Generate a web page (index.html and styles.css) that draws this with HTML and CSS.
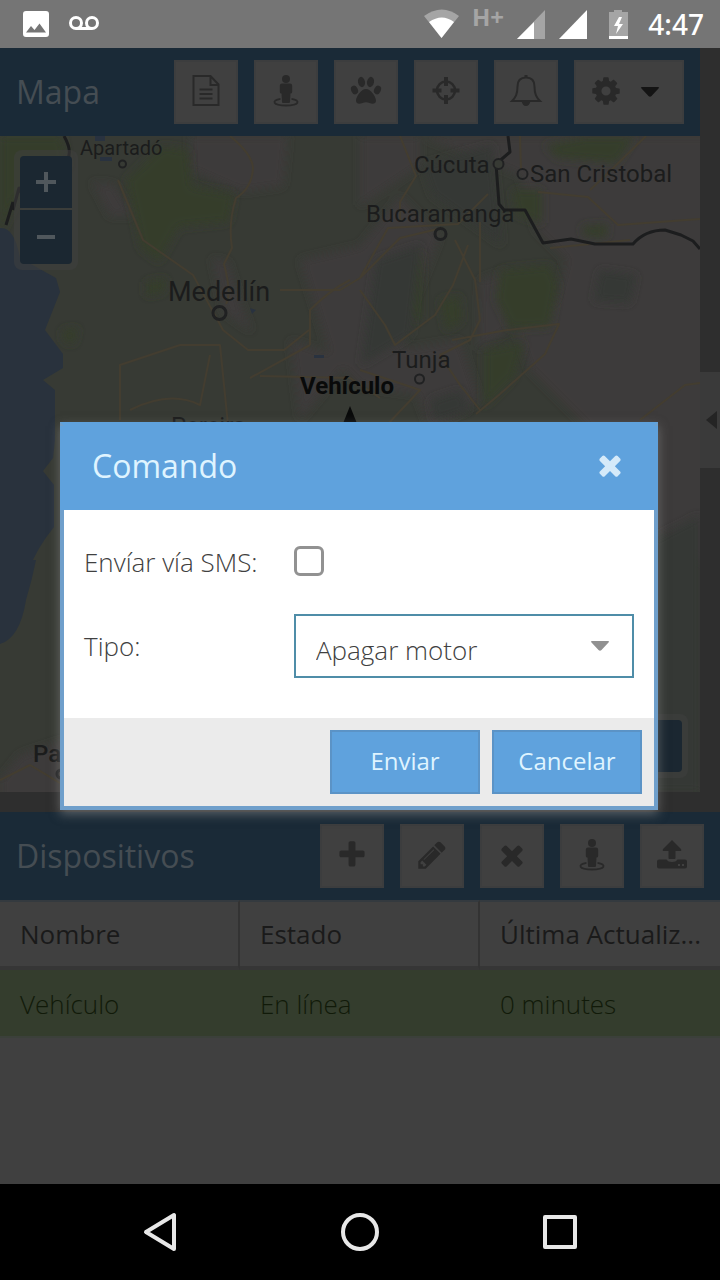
FILE: index.html
```html
<!DOCTYPE html>
<html lang="es">
<head>
<meta charset="utf-8">
<meta name="viewport" content="width=device-width, initial-scale=1">
<title>Mapa</title>
<link rel="stylesheet" href="styles.css">
</head>
<body>
<svg class="defs" aria-hidden="true">
  <symbol id="times" viewBox="-224 -168 2240 2240"><path d="M1490 1322q0 40-28 68l-136 136q-28 28-68 28t-68-28l-294-294-294 294q-28 28-68 28t-68-28l-136-136q-28-28-28-68t28-68l294-294-294-294q-28-28-28-68t28-68l136-136q28-28 68-28t68 28l294 294 294-294q28-28 68-28t68 28l136 136q28 28 28 68t-28 68l-294 294 294 294q28 28 28 68z"/></symbol>
  <symbol id="person" viewBox="0 0 40 40">
    <circle cx="20" cy="7" r="4"/>
    <path d="M16 11.500h8q2.200 0 2.200 2.200v6.300q0 1.500-1.700 1.500l-.5 8.500q0 1-1 1h-6q-1 0-1-1l-.5-8.500q-1.700 0-1.700-1.500v-6.300q0-2.200 2.200-2.200z"/>
    <path d="M14.500 26.800C5 28.500 6.500 33.500 20 33.500s15-5 5.500-6.700" fill="none" stroke="currentColor" stroke-width="1.800"/>
  </symbol>
</svg>
<header class="status">
  <svg class="notice" viewBox="0 0 90 48" role="img" aria-label="Notificaciones">
    <path fill="#fff" fill-rule="evenodd" d="M14 11h20q3 0 3 3v20q0 3-3 3H14q-3 0-3-3V14q0-3 3-3zM14 32.500h20l-6.500-9-5 6.500-3.500-4z" transform="translate(-4)"/>
    <g fill="none" stroke="#fff" stroke-width="3"><circle cx="60" cy="23" r="5.500"/><circle cx="76" cy="23" r="5.500"/><path d="M60 28.500h16"/></g>
  </svg>
  <svg class="signal" viewBox="0 0 48 48" role="img" aria-label="Wi-Fi"><path d="M8 16q18-13 35 0L25.500 38z" fill="#a5a5a5"/><path d="M13 22q13-9 25 0L25.500 38z" fill="#fff"/></svg>
  <span class="network">H+</span>
  <svg class="bars" viewBox="0 0 120 48" role="img" aria-label="Señal y batería">
    <path d="M39 10v29H11z" fill="#a5a5a5"/><path d="M28 22v17H11z" fill="#fff"/><path d="M81 10v29H53z" fill="#fff"/>
    <path d="M108 10h8v2h6v24h-19V12h5z" fill="#a5a5a5"/><path d="M103 36h19v3h-19zM113 17l-5 9h4l-2 8 7-10h-4l3-7z" fill="#fff"/>
  </svg>
  <time>4:47</time>
</header>

<main class="app">
  <div class="upper">
    <section class="panel">
      <div class="bar">
        <h1>Mapa</h1>
        <div class="tools">
          <button type="button" aria-label="Informes"><svg viewBox="0 0 40 40"><path d="M7.500 4h17l8 8.500v20.500h-25z M24.500 4v9h8" fill="none" stroke="currentColor" stroke-width="2"/><path d="M13.500 17.500h13M13.500 22h13M13.500 26.500h13" stroke="currentColor" stroke-width="2"/></svg></button>
          <button type="button" aria-label="Seguir"><svg><use href="#person"/></svg></button>
          <button type="button" aria-label="Animal"><svg viewBox="0 0 40 40"><ellipse cx="15.500" cy="10" rx="3.500" ry="5.200" transform="rotate(-12 15.500 10)"/><ellipse cx="24.500" cy="10" rx="3.500" ry="5.200" transform="rotate(12 24.500 10)"/><ellipse cx="8.500" cy="18" rx="3.300" ry="4.500" transform="rotate(-25 8.500 18)"/><ellipse cx="31.500" cy="18" rx="3.300" ry="4.500" transform="rotate(25 31.500 18)"/><path d="M20 17c5 0 10 8 10 11.500 0 4-4 3.500-6.500 2.500q-3.500-1.500-7 0c-2.500 1-6.500 1.500-6.500-2.500C10 25 15 17 20 17z"/></svg></button>
          <button type="button" aria-label="Centrar"><svg viewBox="0 0 40 40"><circle cx="20" cy="18.500" r="9" fill="none" stroke="currentColor" stroke-width="2.500"/><path d="M18 5h4v9h-4zM18 23h4v9h-4zM6.500 16.500h9v4h-9zM24.500 16.500h9v4h-9z"/></svg></button>
          <button type="button" aria-label="Alertas"><svg viewBox="0 0 40 40"><path d="M20 5.500c-6 0-8.500 4-8.500 9 0 8-2 11-5.500 14.500h28c-3.500-3.500-5.500-6.500-5.500-14.500 0-5-2.500-9-8.500-9z" fill="none" stroke="currentColor" stroke-width="2"/><path d="M18.500 3h3v3h-3zM15.500 29h9q-1 5-4.500 5t-4.500-5z"/></svg></button>
          <button class="wide" type="button" aria-label="Configuración"><svg viewBox="-224 -168 2240 2240"><path d="M1152 896q0-106-75-181t-181-75-181 75-75 181 75 181 181 75 181-75 75-181zm512-109v222q0 12-8 23t-20 13l-185 28q-19 54-39 91 35 50 107 138 10 12 10 25t-9 23q-27 37-99 108t-94 71q-12 0-26-9l-138-108q-44 23-91 38-16 136-29 186-7 28-36 28h-222q-14 0-24.500-8.500t-11.500-21.500l-28-184q-49-16-90-37l-141 107q-10 9-25 9-14 0-25-11-126-114-165-168-7-10-7-23 0-12 8-23 15-21 51-66.500t54-70.500q-27-50-41-99l-183-27q-13-2-21-12.500t-8-23.500v-222q0-12 8-23t19-13l186-28q14-46 39-92-40-57-107-138-10-12-10-24 0-10 9-23 26-36 98.500-107.500t94.500-71.500q13 0 26 10l138 107q44-23 91-38 16-136 29-186 7-28 36-28h222q14 0 24.500 8.500t11.500 21.500l28 184q49 16 90 37l142-107q9-9 24-9 13 0 25 10 129 119 165 170 7 8 7 22 0 12-8 23-15 21-51 66.500t-54 70.500q26 50 41 98l183 28q13 2 21 12.500t8 23.500z"/></svg><svg class="caret" viewBox="0 0 20 12"><path d="M2 1h16q2 0 .5 1.500l-7 7.500q-1.500 1.500-3 0l-7-7.500Q0 1 2 1z"/></svg></button>
        </div>
      </div>
      <div class="map">
        <svg class="chart" viewBox="0 136 700 656" preserveAspectRatio="xMidYMid slice" role="img" aria-label="Mapa de Colombia">
          <defs><filter id="soft" x="-10%" y="-10%" width="120%" height="120%"><feGaussianBlur stdDeviation="4"/></filter></defs>
          <path d="M0 136h700v656H0z" fill="#373a34"/>
          <g fill="#3c3a3b" filter="url(#soft)">
            <path d="M190 136h98l-5 50-42 6-50-22zM92 182l22 2 20 32-24 0zM420 136h290v430l-60-35-60 20V430l-60-60-14-40 40-30 10-40-30-30-16-55zM300 260l60-14 40-50 40 40-40 100 30 60-70-10-30-30zM290 340l60 20-50 60zM212 258l16 4 14 45 10 25-28-20zM360 136h60v30l-60 40zM480 280l28-10 0 60-30 20zM400 350l60-10 20 60-50 30z"/>
            <path d="M20 755l45-15v60H0v-20z"/>
          </g>
          <g fill="#343c2c" filter="url(#soft)">
            <path d="M0 136h62l6 30-50 30-18 40zM126 180l36-34 26 4 4 36 42 8-5 28-50 5-20 35-18-14zM146 282l20-4-2 14-18 4zM62 330l16-2-4 16-10-2zM500 270l50-5 8 20-8 42-40 2-14-30zM402 280l20-30 0 70-12-2zM440 300l20-4 2 25-16 10zM545 145l40-8 50 0-18 26-60-5zM582 226l26-2-2 14-22-2zM484 350l40-8-10 35-30 30zM512 190l30 0 0 34-26-10z"/>
          </g>
          <g fill="#363934" filter="url(#soft)">
            <path d="M422 165l70-20 10 100-70-50zM376 260l45-15-10 90-50 30zM430 400l30-10 10 20-36 12zM600 270l36 5-6 28-36-2zM652 540l48-25v277H650z"/>
          </g>
          <path d="M0 228q14-2 20 30l36 20 4 14-15 38 18 24v14l-20 12 12 10v50l-2 18-10 13 11 14v42q-18 22-26 45-8 22-28 22z" fill="#29323d"/>
          <path d="M0 560h36q-4 20-10 40-6 38-26 44z" fill="#29323d"/>
          <path d="M95 136h10v5H95zM100 157h12v4h-12zM250 308l6 2-4 4zM314 355h10v3h-10z" fill="#29323f"/>
          <g fill="none" stroke="#433d30" stroke-width="2" stroke-linejoin="round">
            <path d="M230 136q22 18 23 32-1 20-17 30-8 25-4 50l-8 16q8 30 2 40M118 180l25 60 50 35 30 55 25 20 36 0 25-20M280 290l60 0 20-12 40-40 42-10M310 345l0-35q20-20 40-30M310 345l-60 33M120 420v-55l60-20 40 0 8 80M130 410q40-20 70-5l10-50M260 376l90 2 30 20M400 136l16 40-16 26 0 20M360 278l28-50 70-4 30-30M360 290l25 35 10 20 40-30 18-30 15-40M455 240l20 40 5 40-10 20-30 15 20 30 20 25M452 340l55-10 52-6-14 30-45 40-24 20M480 222v60M520 136l1 34M538 192l50 5 30 28 82-6M590 190l16-15 40-39M550 248l80-8M360 370l60 20-34 36M640 420l45-35 15-2M0 780l30-15 50 30"/>
          </g>
          <g fill="none" stroke="#1c1d1e" stroke-width="3" stroke-linejoin="round">
            <path d="M64 136q8 14 4 22l-27 20-14 28-8-18-6 22M13 202L6 225"/>
            <path d="M508 136l2 16-14 12 3 40 5 6 21 0 18 33 28-4 24 5 38 0q12-14 32-14l16 5 12 6 7 8"/>
          </g>
          <g fill="none" stroke="#202122" stroke-width="3"><circle cx="219.500" cy="313" r="6.500"/><circle cx="440.500" cy="234" r="5.500"/><circle cx="498.500" cy="164" r="5" fill="#373a34" stroke-width="2"/><circle cx="522.500" cy="174" r="5" stroke-width="2"/><circle cx="419.500" cy="379" r="4.500" stroke-width="2"/><circle cx="122.500" cy="164" r="3.500" stroke-width="2"/><circle cx="61" cy="774" r="4"/></g>
          <g class="places">
            <text x="168" y="301" font-size="27">Medellín</text><text x="366" y="222">Bucaramanga</text><text x="414" y="173">Cúcuta</text><text x="530" y="182">San Cristobal</text>
            <text x="80" y="155" font-size="20">Apartadó</text><text x="392" y="368">Tunja</text><text x="171" y="434">Pereira</text><text x="33" y="762" class="strong">Pasto</text>
          </g>
          <text class="vehicle" x="347" y="394" text-anchor="middle">Vehículo</text>
          <path d="M350 406l12 30h-24z" fill="#090a0a"/>
        </svg>
        <div class="zoom"><button type="button" aria-label="Acercar"><svg viewBox="0 0 20 20"><path d="M8 0h4v8h8v4h-8v8H8v-8H0V8h8z"/></svg></button><button type="button" aria-label="Alejar"><svg viewBox="0 0 20 20"><path d="M1 8h18v4H1z"/></svg></button></div>
        <div class="credits"><button type="button" aria-label="Atribuciones"></button></div>
      </div>
    </section>
    <div class="splitter"><button type="button" aria-label="Expandir panel"><svg viewBox="0 0 12 20"><path d="M11 1v18L0 10z"/></svg></button></div>
  </div>

  <section class="devices">
    <div class="bar">
      <h2>Dispositivos</h2>
      <div class="tools">
        <button type="button" aria-label="Añadir"><svg viewBox="-224 -168 2240 2240"><path d="M1600 736v192q0 40-28 68t-68 28h-416v416q0 40-28 68t-68 28h-192q-40 0-68-28t-28-68v-416h-416q-40 0-68-28t-28-68v-192q0-40 28-68t68-28h416v-416q0-40 28-68t68-28h192q40 0 68 28t28 68v416h416q40 0 68 28t28 68z"/></svg></button>
        <button type="button" aria-label="Editar"><svg viewBox="-224 -168 2240 2240"><path d="M491 1536l91-91-235-235-91 91v107h128v128h107zm523-928q0-22-22-22-10 0-17 7l-542 542q-7 7-7 17 0 22 22 22 10 0 17-7l542-542q7-7 7-17zm-54-192l416 416-832 832h-416v-416zm683 96q0 53-37 90l-166 166-416-416 166-165q36-38 90-38 53 0 91 38l235 234q37 39 37 91z"/></svg></button>
        <button type="button" aria-label="Eliminar"><svg><use href="#times"/></svg></button>
        <button type="button" aria-label="Localizar"><svg><use href="#person"/></svg></button>
        <button type="button" aria-label="Enviar comando"><svg viewBox="0 0 40 40"><path d="M20 4l9 9q1 2-1 2h-4.500v7q0 1-1 1h-5q-1 0-1-1v-7H12q-2 0-1-2z"/><path fill-rule="evenodd" d="M7 23.500h7.500q1.500 2.500 5.500 2.500t5.500-2.500H33q2 0 2 2v5q0 2-2 2H7q-2 0-2-2v-5q0-2 2-2zM26 28v2h2v-2zm4 0v2h2v-2z"/></svg></button>
      </div>
    </div>
    <table>
      <thead><tr><th scope="col">Nombre</th><th scope="col">Estado</th><th scope="col">Última Actualiz...</th></tr></thead>
      <tbody><tr><td>Vehículo</td><td>En línea</td><td>0 minutes</td></tr></tbody>
    </table>
  </section>

  <div class="overlay">
    <form class="dialog" role="dialog" aria-labelledby="title">
      <div class="dialog-head"><h2 id="title">Comando</h2><button type="button" aria-label="Cerrar"><svg><use href="#times"/></svg></button></div>
      <div class="fields">
        <label for="sms">Envíar vía SMS:</label><input id="sms" type="checkbox">
        <label for="type">Tipo:</label>
        <div class="choice"><select id="type"><option>Apagar motor</option></select><svg class="caret" viewBox="0 0 20 12"><path d="M2 1h16q2 0 .5 1.500l-7 7.500q-1.500 1.500-3 0l-7-7.500Q0 1 2 1z"/></svg></div>
      </div>
      <div class="actions"><button type="button">Enviar</button><button type="button">Cancelar</button></div>
    </form>
  </div>
</main>

<nav class="navigation" aria-label="Sistema">
  <button type="button" aria-label="Atrás"><svg viewBox="0 0 40 40"><path d="M34 3v34L6 20z"/></svg></button>
  <button type="button" aria-label="Inicio"><svg viewBox="0 0 40 40"><circle cx="20" cy="20" r="17"/></svg></button>
  <button type="button" aria-label="Recientes"><svg viewBox="0 0 40 40"><path d="M5 5h30v30H5z"/></svg></button>
</nav>
</body>
</html>
```
FILE: styles.css
```css
* { box-sizing: border-box; }
body {
  margin: 0;
  min-height: 100vh;
  display: flex;
  flex-direction: column;
  background: #404040;
  font-family: "Open Sans", sans-serif;
}
button { padding: 0; border: 0; font: inherit; color: inherit; }
svg { display: block; fill: currentColor; }
h1, h2 { margin: 0; font-size: 32px; font-weight: 400; line-height: 44px; }
.defs { position: absolute; width: 0; height: 0; }

.status {
  display: flex;
  align-items: center;
  height: 48px;
  padding: 0 16px;
  background: #757575;
  color: #fff;
}
.notice { width: 90px; height: 48px; margin-right: auto; }
.signal { width: 48px; height: 48px; }
.network { width: 40px; height: 48px; padding-left: 8px; font: 700 24px/34px "Open Sans", sans-serif; color: #a5a5a5; }
.bars { width: 124px; height: 48px; overflow: visible; }
.status time { width: 64px; margin-left: 12px; font: 500 28px/48px "Noto Sans", sans-serif; text-align: right; }

.app { position: relative; flex: 1; display: flex; flex-direction: column; gap: 20px; background: #2e2e2e; }
.upper { flex: 2 1 0; display: flex; min-height: 0; }
.panel { flex: 1; display: flex; flex-direction: column; min-width: 0; }
.bar {
  display: flex;
  align-items: center;
  justify-content: space-between;
  height: 88px;
  padding: 0 16px;
  background: #1a2a37;
  color: #454d53;
}
.tools { display: flex; gap: 16px; }
.tools button {
  display: flex;
  align-items: center;
  justify-content: center;
  width: 64px;
  height: 64px;
  border: 2px solid #3c3d3e;
  background: #404040;
  color: #292929;
}
.tools svg { width: 40px; height: 40px; }
.tools .wide { width: 110px; gap: 14px; padding-right: 12px; }
.caret { width: 20px; height: 12px; }
.tools .caret { width: 20px; height: 12px; color: #141414; }

.map { position: relative; flex: 1; min-height: 0; overflow: hidden; }
.chart { position: absolute; inset: 0; width: 100%; height: 100%; }
.places { font-family: Roboto, sans-serif; font-size: 24px; fill: #1b1c1c; }
.strong { font-weight: 500; }
.vehicle { font: 700 24px Roboto, sans-serif; fill: #090a0a; }
.zoom, .credits { position: absolute; border-radius: 8px; padding: 6px; background: rgb(64 64 64 / 50%); }
.zoom { top: 14px; left: 14px; display: grid; gap: 2px; }
.credits { right: 12px; bottom: 14px; }
.zoom button, .credits button {
  display: flex;
  align-items: center;
  justify-content: center;
  width: 52px;
  height: 52px;
  border-radius: 4px 4px 0 0;
  background: #1b2731;
  color: #50575c;
}
.zoom button:last-child { height: 54px; border-radius: 0 0 4px 4px; }
.credits button { border-radius: 4px; }
.zoom svg { width: 20px; height: 20px; }
.splitter { display: flex; align-items: center; width: 20px; }
.splitter button { display: flex; align-items: center; justify-content: flex-end; width: 20px; height: 96px; padding-right: 2px; background: #3a3a3a; color: #242424; }
.splitter svg { width: 12px; height: 20px; }

.devices { flex: 1 1 0; background: #404040; }
table { width: 100%; table-layout: fixed; border-collapse: separate; border-spacing: 0; font-size: 26px; line-height: 36px; text-align: left; }
th, td { padding: 16px 16px 14px 20px; white-space: nowrap; }
th { padding-top: 14px; padding-bottom: 14px; font-weight: 400; color: #1a1a1a; border-right: 2px solid #333; border-top: 2px solid #343a3f; border-bottom: 4px solid #363636; }
th:last-child { border-right: 0; }
td { font-weight: 300; color: #111a09; background: #343d2d; border-bottom: 2px solid #3b403a; }

.overlay { position: absolute; inset: 0; display: flex; align-items: center; padding: 0 62px 0 60px; }
.dialog { width: 100%; border: 4px solid #6f9fcb; border-top-color: #5fa2dd; background: #fff; box-shadow: 0 4px 10px rgb(136 136 136 / 60%); }
.dialog-head { display: flex; align-items: center; justify-content: space-between; margin: 0 -4px; padding: 18px 28px 22px 32px; background: #5fa2dd; color: #dff4ff; }
.dialog-head button { width: 40px; height: 40px; background: none; color: #d5eaf9; }
.dialog-head svg { width: 40px; height: 40px; }
.fields {
  display: grid;
  grid-template-columns: 210px 1fr;
  grid-template-rows: 64px 64px;
  row-gap: 20px;
  align-items: center;
  padding: 20px 20px 40px;
  font-size: 26px;
  font-weight: 300;
  color: #404040;
}
.fields input { appearance: none; width: 30px; height: 30px; margin: 0 0 2px; border: 3px solid #929292; border-radius: 6px; background: #fff; }
.choice { display: flex; align-items: center; }
.choice select { appearance: none; flex: 1; min-width: 0; height: 64px; padding: 8px 20px 0; border: 2px solid #4f8da8; border-radius: 0; background: #fff; font: inherit; color: inherit; }
.choice .caret { margin: 0 24px 0 -44px; z-index: 1; color: #919191; pointer-events: none; }
.actions { display: flex; justify-content: flex-end; gap: 12px; padding: 12px; background: #ebebeb; }
.actions button { width: 150px; height: 64px; padding-bottom: 4px; border: 2px solid #5b93c6; background: #5fa2dd; color: #dff4ff; font-size: 24px; }

.navigation { display: flex; justify-content: center; gap: 160px; align-items: center; height: 96px; background: #000; }
.navigation button { width: 40px; height: 40px; background: none; }
.navigation svg { fill: none; stroke: #e8e8e8; stroke-width: 4; stroke-linejoin: round; }
```
